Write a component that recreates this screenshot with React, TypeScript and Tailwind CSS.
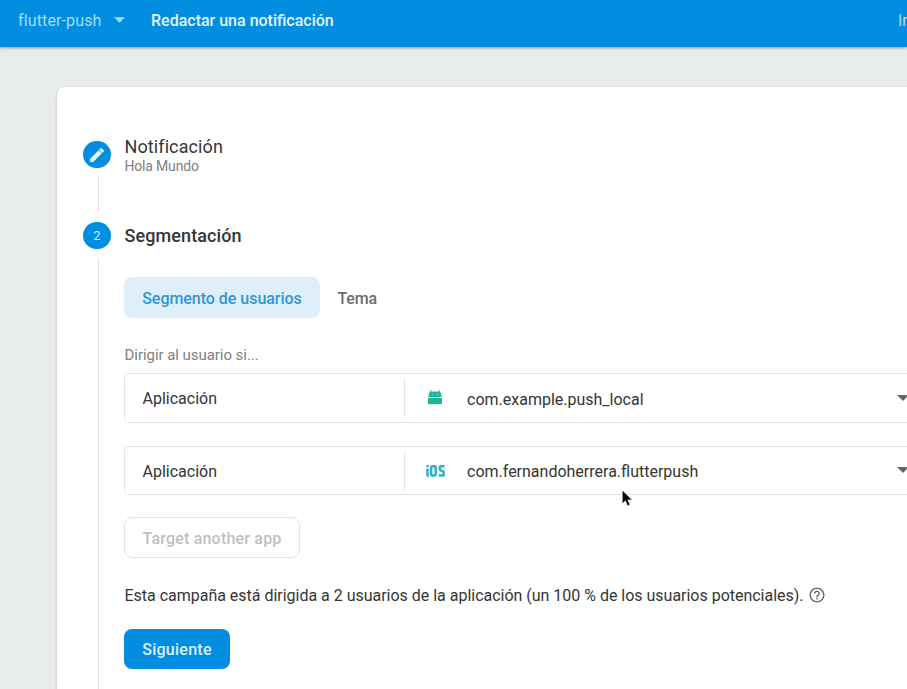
import type { ReactNode } from "react";

function Caret({ className }: { className: string }) {
  return (
    <svg viewBox="0 0 12 6" className={className} fill="currentColor" aria-hidden="true">
      <path d="M0 0h12L6 6z" />
    </svg>
  );
}

function AndroidIcon() {
  return (
    <svg viewBox="0 0 14 15" className="mb-[2px] h-[15px] w-[14px]" fill="#1fb595" aria-hidden="true">
      <path d="M.5 7V5.500C.5 3.900 1.400 2.600 2.600 1.800L1.700.7l.8-.6 1.200 1.400h6.600L11.500.1l.8.6-.9 1.100C12.600 2.600 13.500 3.900 13.500 5.500V7z" />
      <path d="M0 8h14v5q0 1.200-1.200 1.200H1.200Q0 14.200 0 13z" />
      <circle cx="4.400" cy="4.200" r=".6" fill="#8fdcca" />
      <circle cx="9.600" cy="4.200" r=".6" fill="#8fdcca" />
    </svg>
  );
}

function IosIcon() {
  return (
    <svg viewBox="0 0 19 12" className="h-[12px] w-[19px]" fill="none" stroke="#2fb0c7" strokeWidth="2.5" aria-hidden="true">
      <path d="M1.500 3.600v8.200M1.500.1v2.200" />
      <rect x="5.200" y="1.300" width="4.500" height="9.300" rx="1.200" />
      <path d="M18.600 1.300h-3.400q-1.400 0-1.400 1.300v1.400q0 1.200 1 1.500l2 .7q1 .4 1 1.500v1.600q0 1.300-1.300 1.300h-3.600" />
    </svg>
  );
}

function HelpIcon() {
  return (
    <svg viewBox="0 0 24 24" className="mb-[2px] h-[18px] w-[18px]" fill="#6f6f6f" aria-hidden="true">
      <path d="M11 18h2v-2h-2v2zm1-16C6.480 2 2 6.480 2 12s4.480 10 10 10 10-4.480 10-10S17.520 2 12 2zm0 18c-4.410 0-8-3.590-8-8s3.590-8 8-8 8 3.590 8 8-3.590 8-8 8zm0-14c-2.210 0-4 1.790-4 4h2c0-1.100.9-2 2-2s2 .9 2 2c0 2-3 1.750-3 5h2c0-2.250 3-2.500 3-5 0-2.210-1.790-4-4-4z" />
    </svg>
  );
}

function AppRow({ icon, name, className, nameClass }: { icon: ReactNode; name: string; className: string; nameClass: string }) {
  return (
    <div className={`flex items-center rounded-[5px] border border-[#e4e4e4] ${className}`}>
      <span className="w-[279px] pl-[17.500px] pt-[2px] text-[16px]">Aplicación</span>
      <div className="flex h-[38px] flex-1 items-center border-l border-[#e4e4e4]">
        <span className="flex w-[60px] justify-center">{icon}</span>
        <span className={`ml-[2px] text-[16px] ${nameClass}`}>{name}</span>
        <Caret className="mb-px ml-auto mr-[17px] h-[6px] w-[12px] text-[#666]" />
      </div>
    </div>
  );
}

export default function App() {
  return (
    <div className="flex h-[689px] w-[907px] flex-col overflow-hidden bg-[#e8ecec] font-['Roboto',sans-serif] text-[#353535]">
      <header className="z-10 flex h-[47px] shrink-0 items-start overflow-hidden whitespace-nowrap bg-[#018ee0] pl-[18px] pt-[11px] text-[16px] leading-[20px] shadow-[0_1px_3px_rgba(0,0,0,0.35)]">
        <span className="w-[96px] tracking-[0.130px] text-[#a6dcfb]">flutter-push</span>
        <Caret className="mt-[6px] h-[6px] w-[11px] text-[#a6dcfb]" />
        <h1 className="ml-[26px] font-medium text-[#e2f5ff]">Redactar una notificación</h1>
        <span className="ml-auto w-[9px] text-[#a6dcfb]">Ir</span>
      </header>

      <main className="min-h-0 flex-1 pl-[57px] pt-[40px]">
        <section className="flex h-[640px] w-[870px] flex-col rounded-tl-[8px] bg-white pl-[26px] pt-[51px] shadow-[0_1px_3px_rgba(0,0,0,0.25)]">
          <div className="flex h-[84px] shrink-0 gap-[13px]">
            <div className="flex w-[28px] flex-col items-center">
              <span className="mt-[3px] flex h-[27px] w-[28px] items-center justify-center rounded-full bg-[#018ee0]">
                <svg viewBox="0 0 24 24" className="h-[18px] w-[18px]" fill="#e9f7ff" stroke="#e9f7ff" strokeWidth="0.8" aria-hidden="true">
                  <path d="M3 17.250V21h3.750L17.810 9.940l-3.750-3.750L3 17.250zM20.710 7.040c.39-.39.39-1.020 0-1.410l-2.340-2.340c-.39-.39-1.020-.39-1.410 0l-1.830 1.830 3.750 3.750 1.830-1.830z" />
                </svg>
              </span>
              <span className="ml-[2px] mt-[9px] h-[36px] w-px bg-[#e0e0e0]" />
            </div>
            <div className="pl-[0.500px]">
              <h2 className="text-[18px] leading-[18px] tracking-[0.100px]">Notificación</h2>
              <p className="mt-px text-[14px] leading-[18px] tracking-[-0.180px] text-[#808080]">Hola Mundo</p>
            </div>
          </div>

          <div className="flex min-h-0 flex-1 gap-[13px]">
            <div className="flex w-[28px] flex-col items-center">
              <span className="flex h-[27px] w-[28px] shrink-0 items-center justify-center rounded-full bg-[#018ee0] text-[13px] text-[#d5efff]">2</span>
              <span className="ml-[2px] mt-[9px] w-px flex-1 bg-[#e0e0e0]" />
            </div>
            <div className="flex flex-1 flex-col items-start whitespace-nowrap">
              <h2 className="mt-[4px] pl-[0.500px] text-[18px] font-medium leading-[20px] tracking-[0.100px]">Segmentación</h2>
              <div className="mt-[31px] flex h-[41px] items-center">
                <button className="h-[41px] w-[196px] rounded-[8px] bg-[#dfeffa] pt-[2px] text-[16px] font-medium tracking-[-0.030px] text-[#2e96d8]">Segmento de usuarios</button>
                <button className="ml-[17.500px] pt-[2px] text-[16px] font-medium tracking-[-0.150px] text-[#6c6c6c]">Tema</button>
              </div>
              <p className="mt-[27px] pl-[0.500px] text-[15px] leading-[20px] tracking-[-0.050px] text-[#808080]">Dirigir al usuario si...</p>
              <AppRow className="mt-[8px] h-[50px] w-full" nameClass="pt-[3px]" icon={<AndroidIcon />} name="com.example.push_local" />
              <AppRow className="mt-[23px] h-[49px] w-full" nameClass="pt-[2px]" icon={<IosIcon />} name="com.fernandoherrera.flutterpush" />
              <button className="mt-[22px] h-[41px] w-[176px] rounded-[8px] border border-[#e4e4e4] pt-[2px] text-[16px] font-medium tracking-[0.200px] text-[#c0c0c0]">Target another app</button>
              <div className="mt-[27px] flex items-center">
                <p className="w-[684px] pl-[0.500px] pt-px text-[16px] leading-[20px] tracking-[-0.015px]">Esta campaña está dirigida a 2 usuarios de la aplicación (un 100 % de los usuarios potenciales).</p>
                <HelpIcon />
              </div>
              <button className="mt-[23px] h-[40px] w-[106px] rounded-[8px] bg-[#018ee0] pt-[2px] text-[16px] font-medium tracking-[0.250px] text-[#d9f1ff]">Siguiente</button>
            </div>
          </div>
        </section>
      </main>

      <svg viewBox="0 0 12 18" className="absolute left-[621px] top-[489px] h-[19px] w-[13px]" aria-hidden="true">
        <path d="M1 1v13l3-2.700 2 4.700 2.400-1-2-4.600h4.100z" fill="#080808" stroke="#fff" strokeWidth="0.6" />
      </svg>
    </div>
  );
}
